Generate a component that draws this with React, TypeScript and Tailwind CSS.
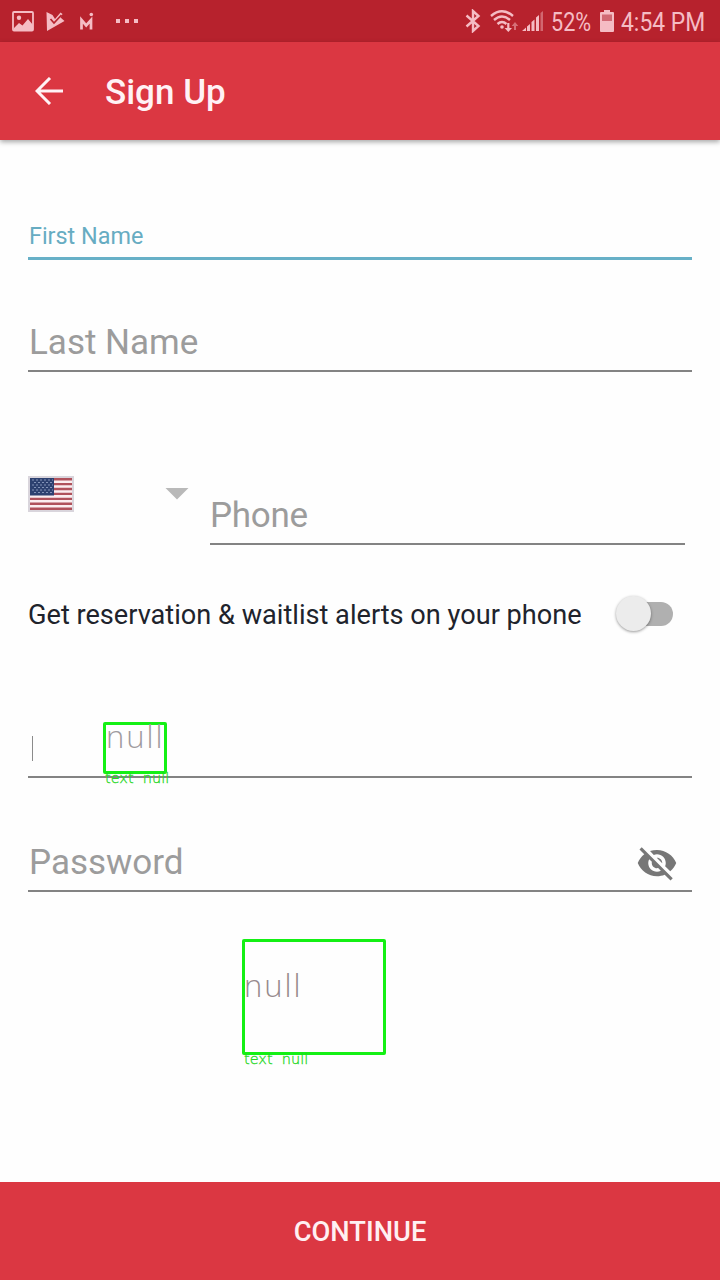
import type { ReactNode } from "react";

function StatusBar() {
  return (
    <div className="flex h-[42px] shrink-0 items-center bg-[#b7222d] text-[#f5bcc4]">
      <svg className="ml-3 h-[21px] w-[22px]" viewBox="0 0 22 21">
        <rect x="1" y="1" width="20" height="18.5" rx="1" fill="none" stroke="currentColor" strokeWidth="1.8" />
        <circle cx="7" cy="6.8" r="2.2" fill="currentColor" />
        <path d="M2 17l5-5 3.5 2.5L16 8l5 6v5H2z" fill="currentColor" />
      </svg>
      <svg className="ml-3 h-[21px] w-[19px]" viewBox="0 0 19 21">
        <path d="M0.500 1l6 3L9 8l5.500-6.500 2 1.500-2 3.500 4 3.500L1 20z" fill="currentColor" />
        <path d="M4.500 8l3.500 4L15.500 4" fill="none" stroke="#b7222d" strokeWidth="1.700" />
      </svg>
      <svg className="ml-[15px] h-[19px] w-[15px]" viewBox="0 0 15 19">
        <path d="M1.500 17.500V8l4.700 5.500L11 8v9.500" fill="none" stroke="currentColor" strokeWidth="2.700" />
        <circle cx="11.300" cy="2.500" r="1.800" fill="currentColor" />
      </svg>
      <div className="ml-[21px] flex gap-[5px]">
        <span className="size-1 bg-[#f5bcc4]" />
        <span className="size-1 bg-[#f5bcc4]" />
        <span className="size-1 bg-[#f5bcc4]" />
      </div>
      <svg className="ml-auto h-[24px] w-[16px]" viewBox="0 0 16 24">
        <path d="M1.500 6.500l12 10.500-5.500 5V2l5.500 5L1.500 17.500" fill="none" stroke="currentColor" strokeWidth="2.400" />
      </svg>
      <svg className="ml-[9px] h-[24px] w-[29px]" viewBox="0 0 29 24">
        <g fill="none" stroke="currentColor" strokeWidth="2.400">
          <path d="M1 7Q12 -2.500 23 7" />
          <path d="M4 11Q12 4 20 11" />
          <path d="M7.500 15Q12 11 16.500 15" />
        </g>
        <circle cx="12" cy="18" r="1.800" fill="currentColor" />
        <path d="M17.200 14h2.200v5h2.600l-3.700 4-3.700-4h2.600z" fill="currentColor" />
        <path d="M24 21v-4h-2.300l3.300-4 3.300 4H26v4z" fill="currentColor" opacity=".5" />
      </svg>
      <svg className="ml-[3px] h-[22px] w-[22px]" viewBox="0 0 22 22">
        <path d="M0 21l4-3.500V21zM5 16.500l3-2.500v7H5zM9.500 12l3-2.500V21h-3zM14 7.500L17 5v16h-3z" fill="currentColor" />
        <path d="M18.500 3l2.500-2v20h-2.500z" fill="currentColor" opacity=".45" />
      </svg>
      <span className="ml-[7px] mt-[2px] w-[42px] font-[Roboto,sans-serif] text-[25px] leading-none">
        <span className="inline-block origin-left scale-x-[.865] whitespace-nowrap">52%</span>
      </span>
      <svg className="ml-[7px] h-[22px] w-[14px]" viewBox="0 0 14 22">
        <path d="M4 0h6v2h3a1 1 0 011 1V21a1 1 0 01-1 1H1a1 1 0 01-1-1V3a1 1 0 011-1h3z" fill="currentColor" />
        <path d="M2 4.500h10V11H2z" fill="#d16974" />
      </svg>
      <span className="ml-[7px] mr-[14px] mt-[2px] w-[85px] font-[Roboto,sans-serif] text-[25px] leading-none">
        <span className="inline-block origin-left scale-x-[.915] whitespace-nowrap">4:54 PM</span>
      </span>
    </div>
  );
}

function Field({ label, className, children }: { label: string; className: string; children?: ReactNode }) {
  return (
    <div className={`flex justify-between border-b-2 border-[#838383] ${className}`}>
      <span className="pl-px text-[35px] leading-[42px] text-[#9c9c9c]">{label}</span>
      {children}
    </div>
  );
}

function Flag() {
  return (
    <svg className="mt-[15px] h-9 w-[46px]" viewBox="0 0 46 36">
      <path d="M0 0h46v36H0z" fill="#d9d5dc" />
      <path d="M2 2h42v32H2z" fill="#fbeef0" />
      <path
        d="M2 3.200h42M2 8.100h42M2 13h42M2 17.900h42M2 22.900h42M2 27.800h42M2 32.700h42"
        stroke="#b0525c"
        strokeWidth="2.400"
      />
      <path d="M2 2h24v17.500H2z" fill="#2d4170" />
      <path
        d="M4 4h21M6 6.500h19M4 9h21M6 11.500h19M4 14h21M6 16.500h19"
        stroke="#8494b8"
        strokeWidth="1"
        strokeDasharray="2 2"
      />
    </svg>
  );
}

function Annotation({ className, textClass, labelClass }: { className: string; textClass: string; labelClass: string }) {
  return (
    <div className={`absolute rounded-[2px] border-[3px] border-[#14f014] font-['Open_Sans',sans-serif] font-light ${className}`}>
      <span className={`absolute text-[31px] leading-none tracking-[2px] ${textClass}`}>null</span>
      <span className={`absolute top-full whitespace-pre font-['DejaVu_Sans',sans-serif] text-[14.500px] font-extralight leading-none text-[#22d722] [-webkit-text-stroke:0.3px_#22d722] ${labelClass}`}>
        text  null
      </span>
    </div>
  );
}

export default function App() {
  return (
    <div className="flex h-[1280px] w-[720px] flex-col bg-[#fefefe] font-[Roboto,sans-serif]">
      <StatusBar />
      <header className="flex h-[98px] shrink-0 items-center bg-[#db3742] text-[#fff2f5] shadow-[0_2px_5px_rgba(0,0,0,0.35)]">
        <svg className="ml-[35px] h-7 w-7" viewBox="0 0 28 28" fill="none" stroke="currentColor" strokeWidth="3">
          <path d="M15 1L2 14l13 13M2 14h26" />
        </svg>
        <h1 className="ml-[42px] mt-[2px] text-[35px] font-medium leading-none">Sign Up</h1>
      </header>
      <main className="flex flex-1 flex-col px-7">
        <div className="mt-[80px] h-[40px] border-b-[3px] border-[#67b0c7] pl-px text-[23.400px] leading-[32px] text-[#67acc2]">
          First Name
        </div>
        <Field label="Last Name" className="mt-[62px] h-[50px]" />
        <div className="mt-[89px] flex h-[84px]">
          <Flag />
          <svg className="ml-[91px] mt-[27px] h-3 w-6" viewBox="0 0 24 12">
            <path d="M0.500 0h23L12 11.500z" fill="#b9b9b9" />
          </svg>
          <Field label="Phone" className="-ml-px mt-[34px] h-[50px] w-[475px] [&>span]:-ml-px [&>span]:tracking-[-0.3px] translate-x-[22px]" />
        </div>
        <div className="mt-[48px] flex h-[42px] items-center">
          <span className="mt-[3px] whitespace-nowrap text-[27.150px] leading-none text-[#20232c]">
            Get reservation &amp; waitlist alerts on your phone
          </span>
          <div className="relative ml-auto mr-[19px] h-6 w-[53px] rounded-full bg-[#b0b0b0]">
            <span className="absolute -left-[4px] -top-[6px] size-[35px] rounded-full bg-[#ececec] shadow-[0_1px_3px_rgba(0,0,0,0.4)]" />
          </div>
        </div>
        <div className="relative mt-[89px] flex h-[54px] border-b-2 border-[#838383]">
          <span className="ml-[4px] mt-[12px] h-[25px] w-px bg-[#8b8b8b]" />
          <Annotation
            className="left-[75px] top-[-2px] h-[52px] w-[64px]"
            textClass="left-0 top-[-4px] text-[#a09b9f]"
            labelClass="-left-px"
          />
        </div>
        <Field label="Password" className="mt-[64px] h-[50px]">
          <svg className="mr-[14px] size-[42px]" viewBox="0 0 24 24" fill="#777">
            <path d="M12 7c2.760 0 5 2.240 5 5 0 .65-.13 1.260-.36 1.830l2.920 2.920c1.510-1.260 2.700-2.890 3.430-4.750-1.730-4.390-6-7.500-11-7.500-1.400 0-2.740.25-3.980.7l2.160 2.160C10.740 7.130 11.350 7 12 7zM2 4.270l2.280 2.280.46.46C3.080 8.300 1.780 10.020 1 12c1.730 4.390 6 7.500 11 7.500 1.550 0 3.030-.3 4.380-.84l.42.42L19.730 22 21 20.730 3.270 3 2 4.270zM7.530 9.800l1.550 1.550c-.05.21-.08.43-.08.65 0 1.660 1.340 3 3 3 .22 0 .44-.03.65-.08l1.550 1.550c-.67.33-1.410.53-2.200.53-2.760 0-5-2.240-5-5 0-.79.2-1.530.53-2.200zm4.310-.78l3.150 3.150.02-.16c0-1.660-1.340-3-3-3l-.17.010z" />
          </svg>
        </Field>
        <div className="relative mt-[47px] h-[116px]">
          <Annotation
            className="left-[214px] top-0 h-[116px] w-[144px]"
            textClass="left-[-1px] top-[28px] text-[#978a8d]"
            labelClass="-left-px"
          />
        </div>
      </main>
      <button className="h-[98px] shrink-0 bg-[#db3742] pt-[2px] text-[27.300px] font-medium text-[#fff0f2]">CONTINUE</button>
    </div>
  );
}
